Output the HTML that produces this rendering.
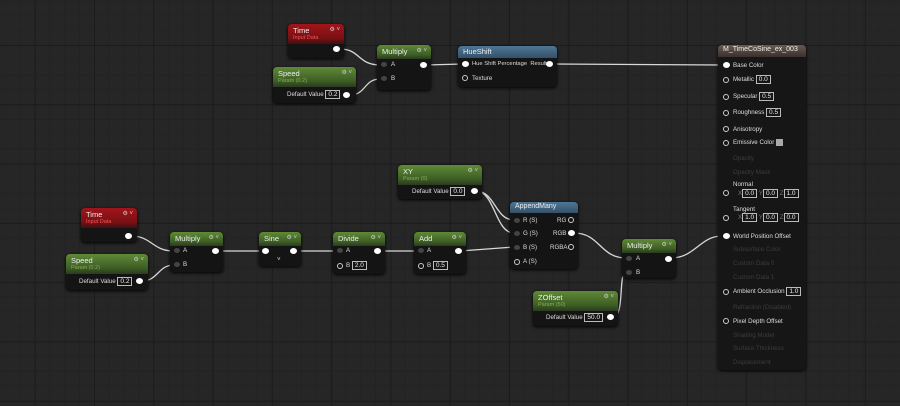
<!DOCTYPE html>
<html><head><meta charset="utf-8"><style>
*{margin:0;padding:0;box-sizing:border-box}
body{width:900px;height:406px;overflow:hidden;background:#262626;font-family:"Liberation Sans",sans-serif;position:relative;
background-image:linear-gradient(90deg,#1c1c1c 1px,transparent 1px),linear-gradient(#1c1c1c 1px,transparent 1px),linear-gradient(90deg,#232323 1px,transparent 1px),linear-gradient(#232323 1px,transparent 1px);
background-size:59.3px 59.3px,59.3px 59.3px,14.8px 14.8px,14.8px 14.8px;background-position:34.7px 45px,34.7px 45px,34.7px 45px,34.7px 45px}
.n{position:absolute;background:#141414;border-radius:4px;box-shadow:0 1px 3px #000;color:#ddd;font-size:6.5px}
.h{height:14px;border-radius:4px 4px 0 0;padding:2px 5px;font-size:7.5px;color:#eee;position:relative}
.h2{height:20px}
.h small{display:block;font-size:5.5px;color:#8a5;margin-top:0}
.g{background:linear-gradient(180deg,#5f8a37,#3d5e25 70%,#2a3a20)}
.r{background:linear-gradient(180deg,#a1141a,#7a1014 70%,#401012)}
.r small{color:#e55}
.b{background:linear-gradient(180deg,#4e7796,#345068)}
.br{background:linear-gradient(180deg,#6a5a50,#3a302c)}
.ic{position:absolute;right:4px;top:2px;font-size:6px;color:#ccc}
.t{position:absolute;white-space:nowrap;font-size:6.2px;color:#ddd}
.pin{position:absolute;width:7px;height:6px;border-radius:50%;background:#fff}
.pd{position:absolute;width:6px;height:5px;border-radius:50%;background:#444}
.po{position:absolute;width:6px;height:6px;border-radius:50%;border:1.2px solid #ccc}
.bx{border:1px solid #bbb;padding:0 2px;font-size:6.5px;color:#eee}
.dim{color:#3c3c3c}
.xl{color:#777}
</style></head><body>
<svg width="900" height="406" style="position:absolute;left:0;top:0" fill="none" stroke="#d8d8d8" stroke-width="1.3">
<path d="M340 49 C360 49 358 65 380 65"/>
<path d="M350 95 C366 95 364 79 380 79"/>
<path d="M426 65 L462 64"/>
<path d="M551 64 L722 65"/>
<path d="M131 236 C152 236 152 251 174 251"/>
<path d="M142 281 C158 281 158 265 174 265"/>
<path d="M218 251 L263 251"/>
<path d="M296 251 L337 251"/>
<path d="M379 251 L418 251"/>
<path d="M460 251 L514 247"/>
<path d="M476 191 C495 191 495 220 514 220"/>
<path d="M476 191 C495 191 495 233 514 233"/>
<path d="M574 233 C600 233 600 258 626 258"/>
<path d="M613 317 C625 317 618 272 626 272"/>
<path d="M671 258 C695 258 700 236 722 236"/>
</svg>

<div class="n" style="left:288px;top:24px;width:56px;height:34px"><div class="h r h2">Time<small>Input Data</small><span class="ic">⚙ ˅</span></div><div class="pin" style="left:45px;top:22px"></div></div>
<div class="n" style="left:273px;top:67px;width:83px;height:36px"><div class="h g h2">Speed<small>Param (0.2)</small><span class="ic">⚙ ˅</span></div><span class="t" style="left:14px;top:24px">Default Value <span class="bx">0.2</span></span><div class="pin" style="left:70px;top:25px"></div></div>
<div class="n" style="left:377px;top:45px;width:54px;height:45px"><div class="h g">Multiply<span class="ic">⚙ ˅</span></div><div class="pd" style="left:4px;top:17px"></div><span class="t" style="left:14px;top:16px">A</span><div class="pd" style="left:4px;top:31px"></div><span class="t" style="left:14px;top:30px">B</span><div class="pin" style="left:43px;top:17px"></div></div>
<div class="n" style="left:458px;top:46px;width:99px;height:41px"><div class="h b" style="height:12px;padding-top:1px">HueShift</div><div class="pin" style="left:4px;top:15px"></div><span class="t" style="left:14px;top:15px;font-size:5.8px">Hue Shift Percentage &nbsp;Result</span><div class="pin" style="left:88px;top:15px"></div><div class="po" style="left:4px;top:29px"></div><span class="t" style="left:14px;top:29px">Texture</span></div>

<div class="n" style="left:718px;top:45px;width:88px;height:325px;background:#161616"><div class="h br" style="height:12px;padding-top:1px;font-size:7px">M_TimeCoSine_ex_003</div>
<div class="pin" style="left:5px;top:17px"></div><span class="t" style="left:15px;top:17px">Base Color</span>
<div class="po" style="left:5px;top:32px"></div><span class="t" style="left:15px;top:31px">Metallic <span class="bx">0.0</span></span>
<div class="po" style="left:5px;top:49px"></div><span class="t" style="left:15px;top:48px">Specular <span class="bx">0.5</span></span>
<div class="po" style="left:5px;top:65px"></div><span class="t" style="left:15px;top:64px">Roughness <span class="bx">0.5</span></span>
<div class="po" style="left:5px;top:81px"></div><span class="t" style="left:15px;top:81px">Anisotropy</span>
<div class="po" style="left:5px;top:95px"></div><span class="t" style="left:15px;top:94px">Emissive Color <span style="display:inline-block;width:7px;height:7px;background:#aaa;vertical-align:middle"></span></span>
<span class="t dim" style="left:15px;top:110px">Opacity</span><span class="t dim" style="left:15px;top:124px">Opacity Mask</span>
<div class="po" style="left:5px;top:145px"></div><span class="t" style="left:15px;top:136px">Normal</span><span class="t" style="left:20px;top:145px"><span class="xl">X</span><span class="bx">0.0</span> <span class="xl">Y</span><span class="bx">0.0</span> <span class="xl">Z</span><span class="bx">1.0</span></span>
<div class="po" style="left:5px;top:170px"></div><span class="t" style="left:15px;top:161px">Tangent</span><span class="t" style="left:20px;top:169px"><span class="xl">X</span><span class="bx">1.0</span> <span class="xl">Y</span><span class="bx">0.0</span> <span class="xl">Z</span><span class="bx">0.0</span></span>
<div class="pin" style="left:5px;top:188px"></div><span class="t" style="left:15px;top:188px">World Position Offset</span>
<span class="t dim" style="left:15px;top:201px">Subsurface Color</span><span class="t dim" style="left:15px;top:215px">Custom Data 0</span><span class="t dim" style="left:15px;top:229px">Custom Data 1</span>
<div class="po" style="left:5px;top:244px"></div><span class="t" style="left:15px;top:243px">Ambient Occlusion <span class="bx">1.0</span></span>
<span class="t dim" style="left:15px;top:259px">Refraction (Disabled)</span>
<div class="po" style="left:5px;top:273px"></div><span class="t" style="left:15px;top:273px">Pixel Depth Offset</span>
<span class="t dim" style="left:15px;top:287px">Shading Model</span><span class="t dim" style="left:15px;top:300px">Surface Thickness</span><span class="t dim" style="left:15px;top:314px">Displacement</span>
</div>

<div class="n" style="left:81px;top:208px;width:56px;height:34px"><div class="h r h2">Time<small>Input Data</small><span class="ic">⚙ ˅</span></div><div class="pin" style="left:44px;top:25px"></div></div>
<div class="n" style="left:66px;top:254px;width:82px;height:36px"><div class="h g h2">Speed<small>Param (0.2)</small><span class="ic">⚙ ˅</span></div><span class="t" style="left:13px;top:24px">Default Value <span class="bx">0.2</span></span><div class="pin" style="left:70px;top:24px"></div></div>
<div class="n" style="left:170px;top:232px;width:53px;height:40px"><div class="h g">Multiply<span class="ic">⚙ ˅</span></div><div class="pd" style="left:4px;top:16px"></div><span class="t" style="left:13px;top:15px">A</span><div class="pd" style="left:4px;top:30px"></div><span class="t" style="left:13px;top:29px">B</span><div class="pin" style="left:42px;top:16px"></div></div>
<div class="n" style="left:259px;top:232px;width:42px;height:34px"><div class="h g">Sine<span class="ic">⚙ ˅</span></div><div class="pin" style="left:3px;top:16px"></div><div class="pin" style="left:31px;top:16px"></div><span class="t" style="left:18px;top:24px">˅</span></div>
<div class="n" style="left:333px;top:232px;width:52px;height:42px"><div class="h g">Divide<span class="ic">⚙ ˅</span></div><div class="pd" style="left:4px;top:16px"></div><span class="t" style="left:13px;top:15px">A</span><div class="po" style="left:4px;top:31px"></div><span class="t" style="left:13px;top:30px">B <span class="bx">2.0</span></span><div class="pin" style="left:41px;top:16px"></div></div>
<div class="n" style="left:414px;top:232px;width:52px;height:42px"><div class="h g">Add<span class="ic">⚙ ˅</span></div><div class="pd" style="left:4px;top:16px"></div><span class="t" style="left:13px;top:15px">A</span><div class="po" style="left:4px;top:31px"></div><span class="t" style="left:13px;top:30px">B <span class="bx">0.5</span></span><div class="pin" style="left:41px;top:16px"></div></div>
<div class="n" style="left:398px;top:165px;width:84px;height:34px"><div class="h g h2">XY<small>Param (0)</small><span class="ic">⚙ ˅</span></div><span class="t" style="left:14px;top:23px">Default Value <span class="bx">0.0</span></span><div class="pin" style="left:73px;top:23px"></div></div>
<div class="n" style="left:510px;top:202px;width:68px;height:67px"><div class="h b" style="height:11px;padding-top:1px;font-size:7px">AppendMany</div>
<div class="pd" style="left:4px;top:16px"></div><span class="t" style="left:13px;top:15px">R (S)</span><span class="t" style="left:47px;top:15px">RG</span><div class="po" style="left:58px;top:15px"></div>
<div class="pd" style="left:4px;top:29px"></div><span class="t" style="left:13px;top:28px">G (S)</span><span class="t" style="left:43px;top:28px">RGB</span><div class="pin" style="left:58px;top:28px"></div>
<div class="pd" style="left:4px;top:43px"></div><span class="t" style="left:13px;top:42px">B (S)</span><span class="t" style="left:40px;top:42px">RGBA</span><div class="po" style="left:58px;top:42px"></div>
<div class="po" style="left:4px;top:57px"></div><span class="t" style="left:13px;top:56px">A (S)</span></div>
<div class="n" style="left:622px;top:239px;width:54px;height:39px"><div class="h g">Multiply<span class="ic">⚙ ˅</span></div><div class="pd" style="left:4px;top:17px"></div><span class="t" style="left:14px;top:16px">A</span><div class="pd" style="left:4px;top:31px"></div><span class="t" style="left:14px;top:30px">B</span><div class="pin" style="left:43px;top:17px"></div></div>
<div class="n" style="left:533px;top:291px;width:85px;height:35px"><div class="h g h2">ZOffset<small>Param (50)</small><span class="ic">⚙ ˅</span></div><span class="t" style="left:13px;top:23px">Default Value <span class="bx">50.0</span></span><div class="pin" style="left:74px;top:23px"></div></div>
</body></html>
